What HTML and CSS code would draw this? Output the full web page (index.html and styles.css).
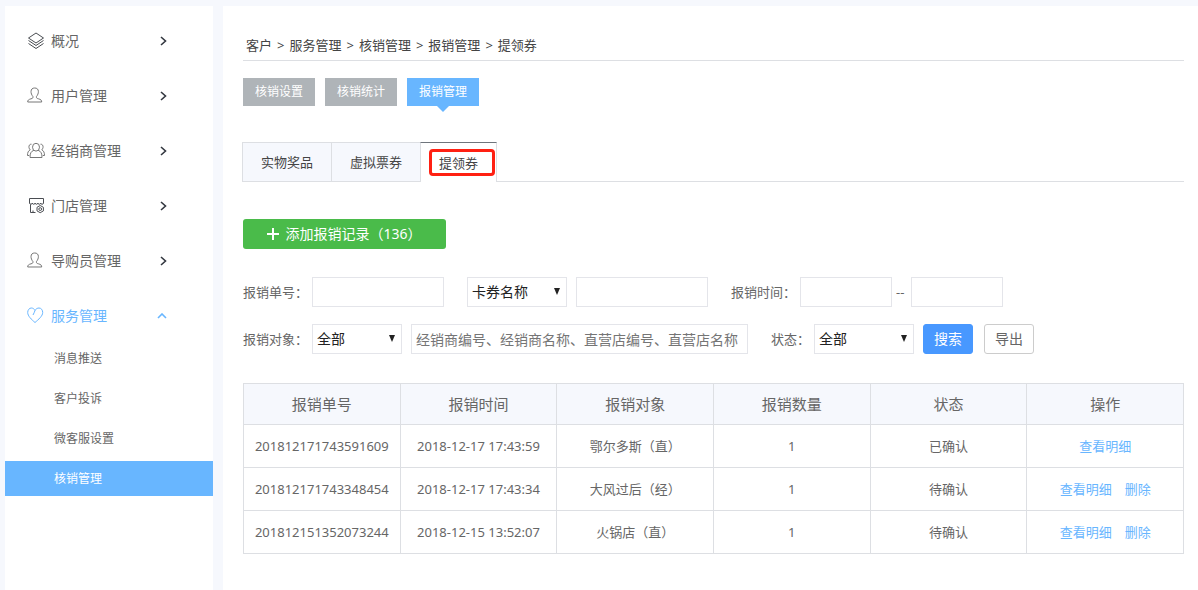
FILE: index.html
```html
<!DOCTYPE html>
<html lang="zh-CN">
<head>
<meta charset="utf-8">
<meta name="viewport" content="width=device-width, initial-scale=1">
<title>提领券</title>
<link rel="stylesheet" href="styles.css">
</head>
<body>
<svg class="sprite" aria-hidden="true">
  <symbol id="icon-layers" viewBox="0 0 18 18"><path d="M9 1 16.500 6 9 11 1.500 6ZM1.500 8.500 9 13.500l7.500-5M1.500 11.500 9 16.500l7.500-5"/></symbol>
  <symbol id="icon-user" viewBox="0 0 18 18"><path d="M6 9.700C4.600 8 4 6 4 4.700 4 2.100 5.500 1 7.700 1s3.700 1.100 3.700 3.700c0 1.300-.6 3.300-2 5 0 1.400.4 1.700 2 2.100 2.400.7 3.300 1.300 3.300 3.200H.7c0-1.900.9-2.500 3.300-3.200 1.600-.4 2-.7 2-2.100Z"/></symbol>
  <symbol id="icon-group" viewBox="0 0 18 18"><path d="M6.900 8.300C3.800 9.400 3 11.500 3 15.500h12c0-4-.8-6.100-3.900-7.200"/><ellipse cx="9" cy="5.200" rx="3.500" ry="3.900"/><path d="M4.500 2.200C2.500 2 1.700 3.700 2 5.600c.2 1 .6 1.700 1.200 2.200C1.300 8.800.5 10.500.5 13.500h1.700M13.500 2.200c2-.2 2.800 1.500 2.500 3.400-.2 1-.6 1.700-1.200 2.200 1.900 1 2.700 2.700 2.700 5.700h-1.700"/></symbol>
  <symbol id="icon-shop" viewBox="0 0 18 18"><path d="M2.500 1.500h14V6c0 1.700-2.800 1.700-2.800 0 0 1.700-2.800 1.700-2.800 0 0 1.700-2.800 1.700-2.800 0 0 1.700-2.800 1.700-2.800 0 0 1.700-2.800 1.700-2.800 0ZM3.500 7.500v8h5M6 15.500v-2M13.200 8.500l3.200 1.800v3.600l-3.200 1.800-3.200-1.800v-3.600Z"/><circle cx="13.200" cy="12.100" r="1.400"/></symbol>
  <symbol id="icon-heart" viewBox="0 0 18 18"><path d="M8 15.500C4.500 12.500.7 9 .7 5.500.7 3 2.300 1 4.300 1c1.600 0 2.900.9 3.700 2.500C8.800 1.900 10.400 1 12 1c2.200 0 3.700 2 3.700 4.500 0 3.500-4.200 7-7.700 10ZM8 3.500C7.300 5.200 7 6.300 6 8"/></symbol>
  <symbol id="icon-right" viewBox="0 0 8 10"><path d="M1 1 5.500 5 1 9"/></symbol>
  <symbol id="icon-up" viewBox="0 0 10 6"><path d="M1 5l4-4 4 4"/></symbol>
</svg>
<div class="layout">
  <nav class="sidebar">
    <a class="menu-item" href="#"><svg class="menu-icon"><use href="#icon-layers"/></svg><span class="menu-text">概况</span><svg class="menu-arrow"><use href="#icon-right"/></svg></a>
    <a class="menu-item" href="#"><svg class="menu-icon soft"><use href="#icon-user"/></svg><span class="menu-text">用户管理</span><svg class="menu-arrow"><use href="#icon-right"/></svg></a>
    <a class="menu-item" href="#"><svg class="menu-icon soft"><use href="#icon-group"/></svg><span class="menu-text">经销商管理</span><svg class="menu-arrow"><use href="#icon-right"/></svg></a>
    <a class="menu-item" href="#"><svg class="menu-icon"><use href="#icon-shop"/></svg><span class="menu-text">门店管理</span><svg class="menu-arrow"><use href="#icon-right"/></svg></a>
    <a class="menu-item" href="#"><svg class="menu-icon soft"><use href="#icon-user"/></svg><span class="menu-text">导购员管理</span><svg class="menu-arrow"><use href="#icon-right"/></svg></a>
    <a class="menu-item open" href="#"><svg class="menu-icon"><use href="#icon-heart"/></svg><span class="menu-text">服务管理</span><svg class="menu-arrow up"><use href="#icon-up"/></svg></a>
    <div class="submenu">
      <a class="sub-item" href="#">消息推送</a>
      <a class="sub-item" href="#">客户投诉</a>
      <a class="sub-item" href="#">微客服设置</a>
      <a class="sub-item active" href="#">核销管理</a>
    </div>
  </nav>
  <main class="content">
    <div class="breadcrumb"><span>客户</span><span>&gt;</span><span>服务管理</span><span>&gt;</span><span>核销管理</span><span>&gt;</span><span>报销管理</span><span>&gt;</span><span>提领券</span></div>
    <div class="sections">
      <button type="button" class="section">核销设置</button>
      <button type="button" class="section">核销统计</button>
      <button type="button" class="section current">报销管理</button>
    </div>
    <div class="tabs">
      <button type="button" class="tab">实物奖品</button>
      <button type="button" class="tab">虚拟票券</button>
      <button type="button" class="tab selected">提领券</button>
    </div>
    <button type="button" class="add"><svg class="plus" viewBox="0 0 12 12"><path d="M6 0v12M0 6h12"/></svg>添加报销记录（136）</button>
    <form class="filters">
      <div class="filter-row">
        <div class="field"><label class="label" for="no">报销单号：</label><input class="box medium" id="no" type="text"></div>
        <div class="field pair"><span class="select-wrap wide"><select class="box" aria-label="卡券"><option>卡券名称</option></select></span><input class="box medium" type="text" aria-label="卡券名称"></div>
        <div class="field"><label class="label" for="from">报销时间：</label><input class="box short" id="from" type="text"><span class="dash">--</span><input class="box short" type="text" aria-label="结束时间"></div>
      </div>
      <div class="filter-row">
        <div class="field pair"><div class="field"><label class="label" for="target">报销对象：</label><span class="select-wrap"><select class="box" id="target"><option>全部</option></select></span></div><input class="box long" type="text" aria-label="对象" placeholder="经销商编号、经销商名称、直营店编号、直营店名称"></div>
        <div class="field"><label class="label" for="state">状态：</label><span class="select-wrap wide"><select class="box" id="state"><option>全部</option></select></span>
        <div class="actions"><button type="button" class="action primary">搜索</button><button type="button" class="action">导出</button></div></div>
      </div>
    </form>
    <table class="records">
      <thead><tr><th>报销单号</th><th>报销时间</th><th>报销对象</th><th>报销数量</th><th>状态</th><th>操作</th></tr></thead>
      <tbody>
        <tr><td>201812171743591609</td><td>2018-12-17 17:43:59</td><td>鄂尔多斯（直）</td><td>1</td><td>已确认</td><td><div class="ops"><a href="#">查看明细</a></div></td></tr>
        <tr><td>201812171743348454</td><td>2018-12-17 17:43:34</td><td>大风过后（经）</td><td>1</td><td>待确认</td><td><div class="ops"><a href="#">查看明细</a><a href="#">删除</a></div></td></tr>
        <tr><td>201812151352073244</td><td>2018-12-15 13:52:07</td><td>火锅店（直）</td><td>1</td><td>待确认</td><td><div class="ops"><a href="#">查看明细</a><a href="#">删除</a></div></td></tr>
      </tbody>
    </table>
  </main>
</div>
</body>
</html>
```

FILE: styles.css
```css
* { box-sizing: border-box; }
body {
  margin: 0;
  background: #f6f8fd;
  color: #666;
  font: 400 13px/20px "Noto Sans", "Noto Sans CJK SC", sans-serif;
}
button, input, select { font: inherit; color: inherit; margin: 0; }
button { padding: 0; cursor: pointer; }
a { color: inherit; text-decoration: none; }
svg { fill: none; stroke: currentColor; }
.sprite { position: absolute; width: 0; height: 0; }

.layout { display: flex; gap: 10px; min-height: 100vh; padding: 6px 0 0 5px; }
.sidebar { flex: 0 0 208px; padding-top: 7px; background: #fff; }
.menu-item { display: flex; align-items: center; height: 55px; padding: 0 45px 0 22px; font-size: 14px; }
.menu-item.open { color: #68b6ff; }
.menu-icon { width: 18px; height: 18px; color: #4a4d52; }
.menu-icon.soft { color: #777; }
.open .menu-icon { color: #68b6ff; }
.menu-text { flex: 1; padding-left: 6px; }
.menu-arrow { width: 8px; height: 10px; color: #333840; stroke-width: 1.6; }
.menu-arrow.up { width: 10px; height: 6px; margin-right: 1px; color: #68b6ff; }
.submenu { display: grid; gap: 5px; margin-top: -2px; font-size: 12px; }
.sub-item { padding-left: 49px; line-height: 35px; }
.sub-item.active { background: #68b6ff; color: #fff; }

.content { flex: 1; min-width: 0; padding: 28px 14px 36px 20px; background: #fff; }
.breadcrumb { display: flex; gap: 5px; height: 27px; padding-left: 3px; line-height: 22px; color: #444; border-bottom: 1px solid #dddfe3; }
.sections { display: flex; gap: 10px; margin-top: 17px; }
.section { position: relative; width: 72px; height: 28px; border: 0; background: #afb4b8; color: #fff; font-size: 12px; }
.section.current { background: #68b6ff; }
.section.current::after { content: ""; position: absolute; top: 100%; left: 30px; border: 6px solid transparent; border-top-color: #68b6ff; border-bottom: 0; }
.tabs { display: flex; margin: 36px 0 0 -1px; box-shadow: inset 0 -1px #dddfe3; }
.tab { height: 40px; padding: 0 18px; border: solid #dddfe3; border-width: 1px 0 1px 1px; background: #f6f8fd; color: #444; }
.tab.selected { position: relative; border-width: 1px 1px 0; border-top-color: #6f757c; background: #fff; }
.tab.selected::after { content: ""; position: absolute; inset: 6px 1px 6px 8px; border: 3px solid #ff2012; border-radius: 4px; }
.add { display: flex; align-items: center; justify-content: center; gap: 6px; width: 203px; height: 30px; margin-top: 37px; border: 0; border-radius: 3px; background: #4abb4a; color: #fff; font-size: 14px; }
.plus { width: 12px; height: 12px; stroke-width: 2; }

.filters { display: grid; gap: 17px; margin-top: 28px; }
.filter-row { display: flex; gap: 23px; }
.field { display: flex; align-items: center; gap: 4px; }
.field.pair { gap: 9px; }
.label { flex: none; }
.box { display: block; width: 100%; height: 30px; padding: 0 4px; border: 1px solid #e4e5ea; border-radius: 0; background: #fff; font-size: 14px; }
.box.medium { width: 132px; }
.box.short { width: 92px; }
.box.long { width: 337px; }
.box::placeholder { color: #757575; }
.dash { width: 11px; }
.select-wrap { position: relative; width: 90px; }
.select-wrap.wide { width: 100px; }
.select-wrap select { appearance: none; color: #222; }
.select-wrap::after { content: ""; position: absolute; top: 11px; right: 7px; border: solid transparent; border-width: 7px 3px 0; border-top-color: #222; pointer-events: none; }
.actions { display: flex; gap: 11px; padding-left: 5px; }
.action { width: 50px; height: 30px; border: 1px solid #ccc; border-radius: 3px; background: #fff; font-size: 14px; }
.action.primary { border-color: #4898ff; background: #4898ff; color: #fff; }

.records { width: 100%; margin-top: 29px; table-layout: fixed; border-collapse: collapse; text-align: center; }
.records th, .records td { height: 43px; padding: 0; border: 1px solid #dddfe3; white-space: nowrap; }
.records th { height: 41px; background: #f6f8fd; font-size: 15px; font-weight: inherit; }
.ops { display: flex; justify-content: center; gap: 13px; color: #68b6ff; }
```
